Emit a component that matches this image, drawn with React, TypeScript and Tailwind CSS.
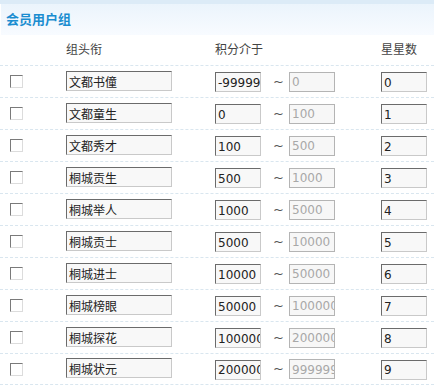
import React from "react";

const groups = [
  { title: "文都书僮", min: "-999999", max: "0", stars: "0" },
  { title: "文都童生", min: "0", max: "100", stars: "1" },
  { title: "文都秀才", min: "100", max: "500", stars: "2" },
  { title: "桐城贡生", min: "500", max: "1000", stars: "3" },
  { title: "桐城举人", min: "1000", max: "5000", stars: "4" },
  { title: "桐城贡士", min: "5000", max: "10000", stars: "5" },
  { title: "桐城进士", min: "10000", max: "50000", stars: "6" },
  { title: "桐城榜眼", min: "50000", max: "100000", stars: "7" },
  { title: "桐城探花", min: "100000", max: "200000", stars: "8" },
  { title: "桐城状元", min: "200000", max: "999999", stars: "9" },
];

const font = "font-['DejaVu_Sans','Noto_Sans_CJK_SC',sans-serif]";

function Field({ value, width, muted }: { value: string; width: string; muted?: boolean }) {
  return (
    <input
      readOnly
      value={value}
      className={`${width} h-[20px] border border-solid pl-[2px] pr-0 pt-[1px] text-[12px] leading-[17px] outline-none ${font} ${
        muted
          ? "border-[#b4b4b4] bg-[#f7f7f7] text-[#a8a8a8]"
          : "border-t-[#6b6b6b] border-l-[#6b6b6b] border-r-[#c9c9c9] border-b-[#c9c9c9] bg-[#f8f8f8] text-[#222]"
      }`}
    />
  );
}

export default function App() {
  return (
    <div className={`w-[434px] h-[388px] overflow-hidden bg-white ${font}`}>
      <div className="h-[4px] bg-[#dcebf7]" />
      <div className="ml-[1px] h-[31px] bg-gradient-to-b from-[#ebf4fc] to-[#f8fbff] pl-[5px] flex items-center">
        <span className="text-[13px] font-bold text-[#1b8dd0]">会员用户组</span>
      </div>
      <div className="h-[30px] flex items-center text-[12px] text-[#444]">
        <span className="ml-[66px] w-[149px]">组头衔</span>
        <span className="w-[166px]">积分介于</span>
        <span>星星数</span>
      </div>
      {groups.map((g, i) => (
        <div
          key={g.title}
          className={`h-[32px] flex items-center border-t border-dashed border-[#d9e6ef] ${
            i === groups.length - 1 ? "border-b" : ""
          }`}
        >
          <div className="ml-[10px] w-[13px] h-[13px] border border-t-[#7a7a7a] border-l-[#7a7a7a] border-r-[#dcdcdc] border-b-[#dcdcdc] bg-white" />
          <div className="ml-[43px]">
            <Field value={g.title} width="w-[106px]" />
          </div>
          <div className="ml-[43px]">
            <Field value={g.min} width="w-[46px]" />
          </div>
          <span className="w-[28px] pr-[5px] text-right text-[13px] text-[#555]">~</span>
          <Field value={g.max} width="w-[46px]" muted />
          <div className="ml-[46px]">
            <Field value={g.stars} width="w-[46px]" />
          </div>
        </div>
      ))}
    </div>
  );
}
